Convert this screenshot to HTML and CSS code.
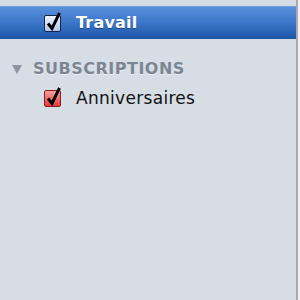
FILE: index.html
```html
<!DOCTYPE html>
<html>
<head>
<meta charset="utf-8">
<link rel="stylesheet" href="styles.css">
</head>
<body>
<div class="app">
  <aside class="sidebar">
    <div class="row selected">
      <span class="cb cb-blue">
        <svg class="check" viewBox="0 0 16 16" width="16" height="16"><path d="M3 7.5 L7 12.5 L14.5 -3" /></svg>
      </span>
      <span class="label label-sel">Travail</span>
    </div>
    <div class="group-header">
      <span class="tri"></span>
      <span class="group-title">SUBSCRIPTIONS</span>
    </div>
    <div class="row">
      <span class="cb cb-red">
        <svg class="check" viewBox="0 0 16 16" width="16" height="16"><path d="M3 7.5 L7 12.5 L14.5 -3" /></svg>
      </span>
      <span class="label">Anniversaires</span>
    </div>
  </aside>
  <div class="divider"></div>
  <div class="content"></div>
</div>
</body>
</html>
```
FILE: styles.css
```css
html, body {
  margin: 0;
  padding: 0;
  height: 100%;
}
body {
  font-family: "DejaVu Sans", "Liberation Sans", sans-serif;
}
.app {
  display: flex;
  height: 300px;
  width: 300px;
  overflow: hidden;
}
.sidebar {
  width: 296px;
  flex: none;
  background: #d6dde5;
  padding-top: 6px;
  display: flex;
  flex-direction: column;
}
.divider {
  width: 2px;
  flex: none;
  background: #a6aaae;
}
.content {
  flex: 1;
  background: #f4f4f4;
}
.row {
  display: flex;
  align-items: center;
  height: 24px;
  padding-left: 44px;
  gap: 15px;
}
.row.selected {
  height: 32px;
  border-top: 1px solid #6fa0de;
  background: linear-gradient(#5a91db, #3b75c8 50%, #1b55a7);
}
.cb {
  width: 15px;
  height: 15px;
  flex: none;
  border-radius: 2px;
  position: relative;
}
.cb-blue {
  border: 1px solid #16264a;
  background: linear-gradient(#eef4fc, #b3c8e8);
}
.cb-red {
  border: 1px solid #8c1c1c;
  background: linear-gradient(#f7a0a0, #e23a3a);
}
.check {
  position: absolute;
  left: 0;
  top: 0;
  overflow: visible;
}
.check path {
  fill: none;
  stroke: #000;
  stroke-width: 2.9;
  stroke-linejoin: miter;
  stroke-linecap: butt;
}
.label {
  font-size: 17px;
  color: #111;
  line-height: 20px;
  letter-spacing: 0.3px;
}
.label-sel {
  font-size: 16px;
  font-weight: bold;
  color: #fff;
  letter-spacing: 0.2px;
  text-shadow: 0 1px 0 rgba(0,0,0,0.35);
}
.group-header {
  display: flex;
  align-items: center;
  height: 20px;
  margin-top: 20px;
  margin-bottom: 7px;
  padding-left: 12px;
  gap: 11px;
}
.tri {
  width: 0;
  height: 0;
  border-left: 5px solid transparent;
  border-right: 5px solid transparent;
  border-top: 9px solid #8b95a1;
}
.group-title {
  font-size: 16px;
  font-weight: bold;
  color: #7b8692;
  letter-spacing: 0.5px;
  line-height: 20px;
  text-shadow: 0 1px 0 rgba(255,255,255,0.5);
}
```
